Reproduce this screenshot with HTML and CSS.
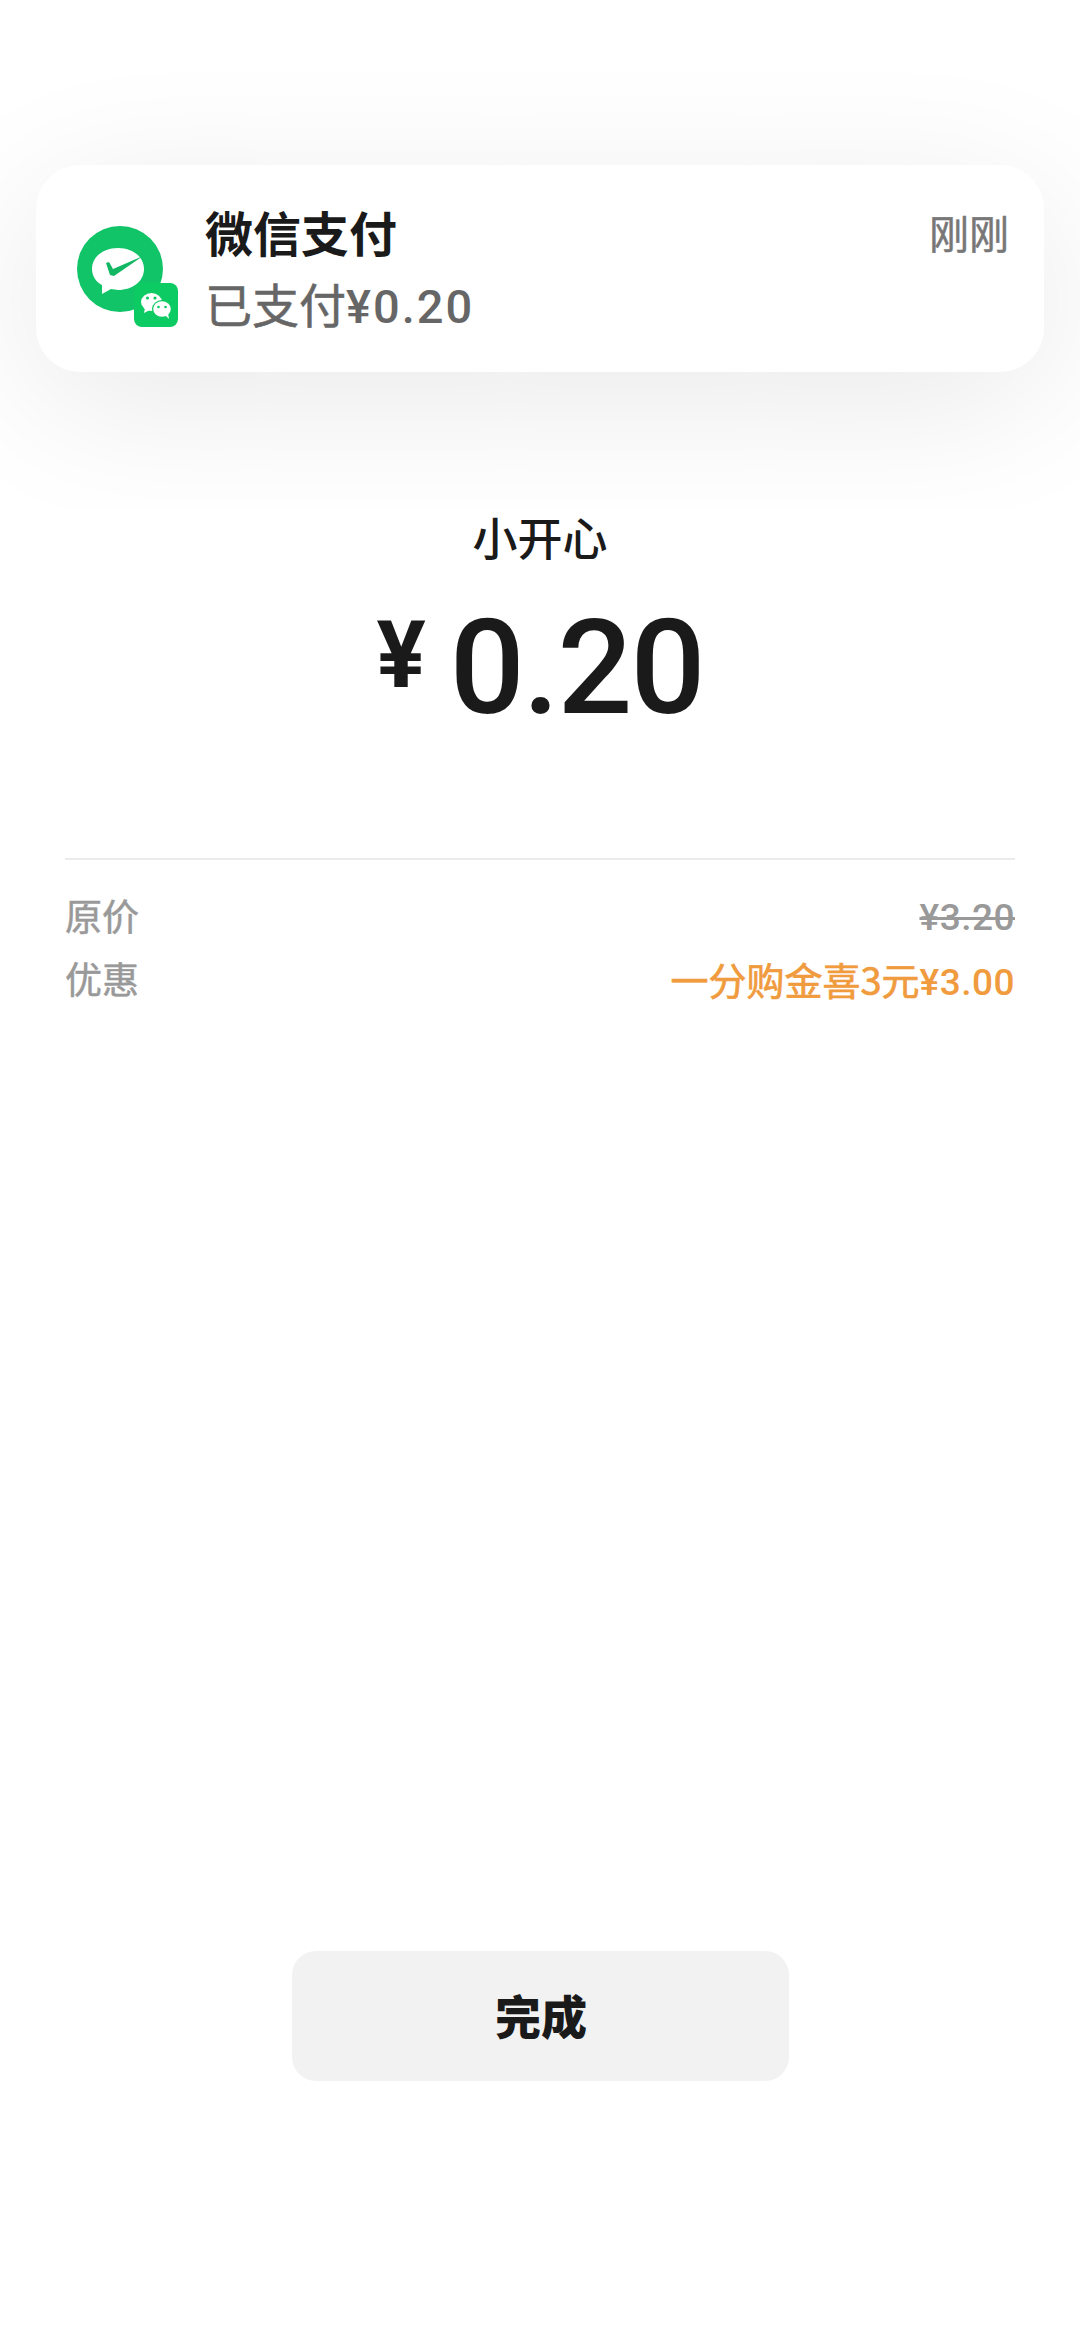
FILE: index.html
```html
<!DOCTYPE html>
<html lang="zh">
<head>
<meta charset="utf-8">
<title>微信支付</title>
<link rel="stylesheet" href="styles.css">
</head>
<body>
<div class="page">
  <section class="notice">
    <div class="notice-icon">
      <svg class="pay-logo" width="102" height="101" viewBox="0 0 102 101">
        <circle cx="43" cy="43" r="43" fill="#12c468"/>
        <path d="M41 22C26 22 15 31 15 43c0 7 4 13 10 16l0 9 9-5c2 0 5 1 7 1 15 0 26-9 26-21S56 22 41 22z" fill="#fff"/>
        <path d="M29 37l3-1 4 7 30-13-29 20-4-1z" fill="#12b764"/>
        <rect x="57" y="57" width="44" height="44" rx="8" fill="#0ccb62"/>
        <ellipse cx="74.5" cy="76" rx="10.5" ry="9" fill="#fff"/>
        <path d="M68 82l-1 5 6-3z" fill="#fff"/>
        <ellipse cx="85" cy="83" rx="10" ry="9" fill="#0ccb62"/>
        <ellipse cx="85" cy="83" rx="8.8" ry="7.8" fill="#fff"/>
        <path d="M88 89l4 4-1-6z" fill="#fff"/>
        <circle cx="70.5" cy="72" r="1.6" fill="#0ccb62"/>
        <circle cx="78" cy="72" r="1.6" fill="#0ccb62"/>
        <circle cx="81.5" cy="81" r="1.3" fill="#0ccb62"/>
        <circle cx="88.5" cy="81" r="1.3" fill="#0ccb62"/>
      </svg>
    </div>
    <div class="notice-text">
      <div class="notice-title">微信支付</div>
      <div class="notice-sub">已支付<span class="sub-num">¥0.20</span></div>
    </div>
    <div class="notice-time">刚刚</div>
  </section>

  <section class="summary">
    <div class="payee">小开心</div>
    <div class="amount"><span class="yen">¥</span><span class="value">0.20</span></div>
  </section>

  <section class="details">
    <div class="row">
      <span class="label">原价</span>
      <span class="num struck">¥3.20</span>
    </div>
    <div class="row">
      <span class="label">优惠</span>
      <span class="promo">一分购金喜3元<span class="num">¥3.00</span></span>
    </div>
  </section>

  <div class="spacer"></div>
  <button class="done">完成</button>
</div>
</body>
</html>
```
FILE: styles.css
```css
* { box-sizing: border-box; }
html, body { margin: 0; padding: 0; background: #fff; }
body { font-family: "Roboto", "Noto Sans CJK SC", sans-serif; color: #1a1a1a; }
.page { width: 1080px; height: 2340px; display: flex; flex-direction: column; align-items: center; padding-top: 165px; padding-bottom: 259px; }

.notice { width: 1008px; height: 207px; background: #fff; border-radius: 44px; box-shadow: 0 30px 150px rgba(0,0,0,.09); display: flex; align-items: flex-start; padding: 0 35px 0 41px; }
.notice-icon { padding-top: 61px; width: 128px; flex: none; }
.pay-logo { display: block; }
.notice-text { flex: 1; padding-top: 33px; }
.notice-title { font-family: "Noto Sans CJK SC", sans-serif; font-size: 48px; line-height: 66px; font-weight: 700; color: #1a1a1a; }
.notice-sub { font-family: "Noto Sans CJK SC", sans-serif; font-size: 47px; line-height: 66px; margin-top: 6px; -webkit-text-stroke: .6px #666; color: #666; }
.sub-num { font-family: "Roboto", sans-serif; font-size: 47px; font-weight: 500; letter-spacing: 2px; -webkit-text-stroke: 0; }
.notice-time { font-family: "Noto Sans CJK SC", sans-serif; font-size: 40px; line-height: 56px; padding-top: 39px; -webkit-text-stroke: .5px #777; color: #777; }

.summary { display: flex; flex-direction: column; align-items: center; margin-top: 133px; }
.payee { font-family: "Noto Sans CJK SC", sans-serif; font-size: 45px; line-height: 64px; font-weight: 500; }
.amount { display: flex; align-items: flex-start; height: 150px; margin-top: 24px; margin-bottom: 3px; }
.yen { font-size: 92px; line-height: 108px; font-weight: 700; margin-top: 9px; margin-right: 24px; }
.value { font-size: 132px; line-height: 150px; font-weight: 500; letter-spacing: -2px; }

.details { width: 950px; margin-top: 112px; border-top: 2px solid #ebebeb; padding-top: 29px; display: flex; flex-direction: column; gap: 11px; }
.row { display: flex; justify-content: space-between; align-items: center; height: 52px; font-family: "Noto Sans CJK SC", sans-serif; font-size: 37px; color: #999; -webkit-text-stroke: .5px #999; }
.num { font-family: "Roboto", sans-serif; font-size: 37px; font-weight: 500; letter-spacing: .5px; -webkit-text-stroke: 0; }
.struck { text-decoration: line-through; padding-top: 5px; }
.promo { color: #f09b3e; font-size: 38px; -webkit-text-stroke: .7px #f09b3e; }

.spacer { flex: 1; }
.done { width: 497px; height: 130px; border: 0; border-radius: 24px; background: #f2f2f2; font-family: "Noto Sans CJK SC", sans-serif; font-size: 46px; font-weight: 900; color: #1a1a1a; padding: 0 0 4px 2px; }
```
